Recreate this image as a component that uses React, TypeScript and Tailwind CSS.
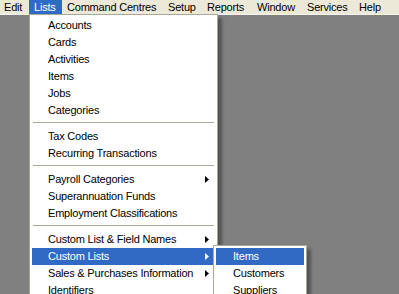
import React from 'react';

type Entry = { label: string; sub?: boolean; active?: boolean } | 'sep';

const BAR: { label: string; w: string; pl: string; active?: boolean }[] = [
  { label: 'Edit', w: 'w-[29px]', pl: 'pl-[4px]' },
  { label: 'Lists', w: 'w-[33px]', pl: 'pl-[5px]', active: true },
  { label: 'Command Centres', w: 'w-[100px]', pl: 'pl-[5px]' },
  { label: 'Setup', w: 'w-[39px]', pl: 'pl-[6px]' },
  { label: 'Reports', w: 'w-[50px]', pl: 'pl-[6px]' },
  { label: 'Window', w: 'w-[50px]', pl: 'pl-[6px]' },
  { label: 'Services', w: 'w-[52px]', pl: 'pl-[6px]' },
  { label: 'Help', w: 'w-[46px]', pl: 'pl-[6px]' },
];

const LISTS: Entry[] = [
  { label: 'Accounts' },
  { label: 'Cards' },
  { label: 'Activities' },
  { label: 'Items' },
  { label: 'Jobs' },
  { label: 'Categories' },
  'sep',
  { label: 'Tax Codes' },
  { label: 'Recurring Transactions' },
  'sep',
  { label: 'Payroll Categories', sub: true },
  { label: 'Superannuation Funds' },
  { label: 'Employment Classifications' },
  'sep',
  { label: 'Custom List & Field Names', sub: true },
  { label: 'Custom Lists', sub: true, active: true },
  { label: 'Sales & Purchases Information', sub: true },
  { label: 'Identifiers' },
];

const CUSTOM: Entry[] = [
  { label: 'Items', active: true },
  { label: 'Customers' },
  { label: 'Suppliers' },
];

function Arrow({ white }: { white?: boolean }) {
  return (
    <svg width="4" height="7" viewBox="0 0 4 7" className="absolute right-[6px] top-[5px]">
      <path d="M0 0 L4 3.5 L0 7 Z" fill={white ? '#ffffff' : '#000000'} />
    </svg>
  );
}

function Menu({ items, pl }: { items: Entry[]; pl: string }) {
  return (
    <div className="flex flex-col">
      {items.map((it, i) =>
        it === 'sep' ? (
          <div key={i} className="h-[9px] pt-[3px] px-[1px]">
            <div className="h-px bg-[#aca899]" />
          </div>
        ) : (
          <div
            key={i}
            className={`relative h-[17px] leading-[17px] whitespace-nowrap ${pl} ${
              it.active ? 'bg-[#316ac5] text-white' : 'text-black'
            }`}
          >
            {it.label}
            {it.sub && <Arrow white={it.active} />}
          </div>
        )
      )}
    </div>
  );
}

export default function App() {
  return (
    <div
      className="relative w-[399px] h-[294px] overflow-hidden bg-[#808080] text-[11px] tracking-[-0.2px]"
      style={{ fontFamily: '"Liberation Sans", Arial, sans-serif' }}
    >
      {/* menu bar */}
      <div className="flex h-[14px] bg-[#ece9d8] leading-[14px]">
        {BAR.map((b) => (
          <div
            key={b.label}
            className={`${b.w} ${b.pl} shrink-0 whitespace-nowrap ${
              b.active ? 'bg-[#316ac5] text-white' : 'text-black'
            }`}
          >
            {b.label}
          </div>
        ))}
      </div>
      <div className="h-px bg-[#f4f3ee]" />

      {/* Lists dropdown */}
      <div className="absolute left-[29px] top-[14px] w-[189px] h-[300px] bg-white border border-[#aca899] p-[2px] shadow-[4px_4px_3px_rgba(0,0,0,0.35)]">
        <Menu items={LISTS} pl="pl-[16px]" />
      </div>

      {/* Custom Lists submenu */}
      <div className="absolute left-[213px] top-[245px] w-[94px] h-[70px] bg-white border border-[#aca899] p-[2px] shadow-[4px_4px_3px_rgba(0,0,0,0.35)]">
        <Menu items={CUSTOM} pl="pl-[17px]" />
      </div>
    </div>
  );
}
